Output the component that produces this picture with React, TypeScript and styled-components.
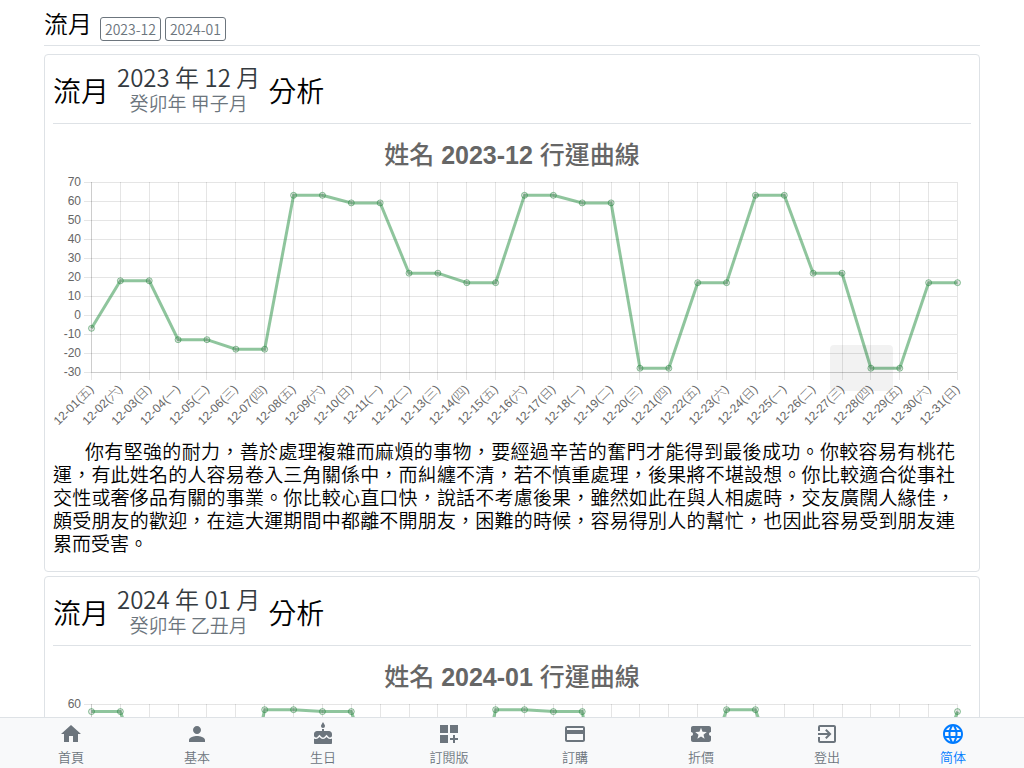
import React from "react";
import styled, { createGlobalStyle } from "styled-components";
import {
  MdHome,
  MdPerson,
  MdCake,
  MdDashboardCustomize,
  MdPayment,
  MdLocalActivity,
  MdExitToApp,
  MdLanguage,
} from "react-icons/md";

const GlobalStyle = createGlobalStyle`
  *, *::before, *::after { box-sizing: border-box; }
  body {
    margin: 0;
    background: #fff;
    color: #000;
    font-family: "Noto Sans CJK TC", "Noto Sans", sans-serif;
    font-weight: 350;
  }
`;

const Shell = styled.div`
  display: flex;
  flex-direction: column;
  height: 100vh;
`;

const Content = styled.main`
  flex: 1;
  min-height: 0;
  overflow-y: auto;
  scrollbar-width: none;
  padding: 0 44px;
`;

const TopBar = styled.header`
  display: flex;
  align-items: flex-end;
  gap: 4px;
  height: 46px;
  padding-bottom: 4px;
  margin-bottom: 8px;
  border-bottom: 1px solid #dee2e6;
`;

const PageTitle = styled.h1`
  margin: 0 4px 0 0;
  font-size: 24px;
  line-height: 36px;
  font-weight: inherit;
`;

const MonthButton = styled.button`
  height: 24px;
  padding: 0 4px;
  border: 1px solid #6c757d;
  border-radius: 3px;
  background: transparent;
  color: #6c757d;
  font-family: inherit;
  font-size: 14px;
  font-weight: inherit;
  line-height: 22px;
  cursor: pointer;
`;

const Card = styled.section`
  margin-bottom: 4px;
  padding: 8px;
  border: 1px solid #dee2e6;
  border-radius: 4px;
`;

const CardHeader = styled.h2`
  display: flex;
  align-items: center;
  gap: 8px;
  height: 61px;
  margin: 0 0 6px;
  padding-bottom: 6px;
  border-bottom: 1px solid #dee2e6;
  font-size: 28px;
  line-height: 32px;
  font-weight: inherit;
`;

const MonthName = styled.span`
  display: flex;
  flex-direction: column;
  align-items: center;
  padding-bottom: 4px;
  color: #343a40;
  font-size: 24px;
  line-height: 28px;
`;

const LunarName = styled.small`
  color: #6c757d;
  font-size: 19px;
  line-height: 23px;
`;

const Reading = styled.p`
  margin: 3px 0 9px;
  padding-right: 16px;
  font-size: 19px;
  line-height: 23px;
  text-indent: 32px;
  text-align: justify;
`;

const ChartSvg = styled.svg`
  display: block;
  width: 100%;
  height: auto;
  font-family: "Liberation Sans", "Noto Sans CJK TC", sans-serif;
  font-size: 12px;
  font-weight: 300;
  fill: #666;
`;

const ChartTitle = styled.text`
  font-size: 25px;
  font-weight: 700;
`;

const TitleWord = styled.tspan`
  font-weight: 500;
`;

const NavBar = styled.nav`
  display: flex;
  height: 51px;
  padding: 0 8px;
  border-top: 1px solid #dee2e6;
  background: #f8f9fa;
`;

const NavLink = styled.a<{ $active?: boolean }>`
  flex: 1;
  display: flex;
  flex-direction: column;
  align-items: center;
  padding-top: 4px;
  color: ${(p) => (p.$active ? "#007bff" : "#6c757d")};
  font-size: 13px;
  line-height: 22px;
  text-decoration: none;

  svg {
    flex: none;
  }
`;

type Month = {
  id: string;
  year: string;
  month: string;
  lunar: string;
  max: number;
  firstWeekday: number;
  values: number[];
  tooltip?: boolean;
  reading: string;
};

const months: Month[] = [
  {
    id: "2023-12",
    year: "2023",
    month: "12",
    lunar: "癸卯年 甲子月",
    max: 70,
    firstWeekday: 5,
    tooltip: true,
    values: [
      -7, 18, 18, -13, -13, -18, -18, 63, 63, 59, 59, 22, 22, 17, 17, 63, 63,
      59, 59, -28, -28, 17, 17, 63, 63, 22, 22, -28, -28, 17, 17,
    ],
    reading:
      "你有堅強的耐力，善於處理複雜而麻煩的事物，要經過辛苦的奮門才能得到最後成功。你較容易有桃花運，有此姓名的人容易卷入三角關係中，而糾纏不清，若不慎重處理，後果將不堪設想。你比較適合從事社交性或奢侈品有關的事業。你比較心直口快，說話不考慮後果，雖然如此在與人相處時，交友廣闊人緣佳，頗受朋友的歡迎，在這大運期間中都離不開朋友，困難的時候，容易得別人的幫忙，也因此容易受到朋友連累而受害。",
  },
  {
    id: "2024-01",
    year: "2024",
    month: "01",
    lunar: "癸卯年 乙丑月",
    max: 60,
    firstWeekday: 1,
    values: [
      56, 56, 13, 13, -10, -10, 57, 57, 56, 56, 13, 13, -10, -10, 57, 57, 56,
      56, -28, -28, 13, 13, 57, 57, 13, 13, -28, -28, 13, 13, 56,
    ],
    reading: "",
  },
];

const WEEKDAYS = "日一二三四五六";
const LEFT = 38;
const RIGHT = 904;
const TOP = 52;
const ROW = 19;
const ROWS = 10;
const BOTTOM = TOP + ROW * ROWS;
const LINE = "rgba(32, 140, 60, 0.5)";

function MonthChart({ data }: { data: Month }) {
  const step = (RIGHT - LEFT) / (data.values.length - 1);
  const x = (i: number) => LEFT + 0.5 + i * step;
  const y = (v: number) => TOP + ((data.max - v) / 10) * ROW;
  const rows = Array.from({ length: ROWS + 1 }, (_, i) => i);

  return (
    <ChartSvg viewBox="0 0 918 306" role="img" aria-label={`${data.id} 行運曲線`}>
      <ChartTitle x="459" y="34" textAnchor="middle">
        <TitleWord>姓名</TitleWord> {data.id} <TitleWord>行運曲線</TitleWord>
      </ChartTitle>
      {rows.map((r) => (
        <g key={r}>
          <rect x={LEFT - 7} y={TOP + r * ROW} width={RIGHT - LEFT + 7} height="1" fill="rgba(0,0,0,0.1)" />
          <text x="28" y={TOP + r * ROW + 4} textAnchor="end">
            {data.max - r * 10}
          </text>
        </g>
      ))}
      {data.values.map((_, i) => (
        <g key={i}>
          <rect x={Math.floor(x(i))} y={TOP} width="1" height={BOTTOM - TOP + 8} fill="rgba(0,0,0,0.1)" />
          <text transform={`translate(${x(i)} ${BOTTOM + 15}) rotate(-45)`} x="0" y="4" textAnchor="end">
            {`${data.month}-${String(i + 1).padStart(2, "0")}(${WEEKDAYS[(data.firstWeekday + i) % 7]})`}
          </text>
        </g>
      ))}
      <rect x={LEFT} y={TOP} width="1" height={BOTTOM - TOP} fill="rgba(0,0,0,0.1)" />
      <rect x={LEFT} y={BOTTOM} width={RIGHT - LEFT} height="1" fill="rgba(0,0,0,0.1)" />
      <polyline
        points={data.values.map((v, i) => `${x(i)},${y(v)}`).join(" ")}
        fill="none"
        stroke={LINE}
        strokeWidth="3"
      />
      {data.values.map((v, i) => (
        <circle key={i} cx={x(i)} cy={y(v)} r="3" fill="rgba(0,0,0,0.1)" stroke={LINE} />
      ))}
      {data.tooltip && (
        <path
          d="M781 215h55a4 4 0 0 1 4 4v17l3 2-3 2v17a4 4 0 0 1-4 4h-55a4 4 0 0 1-4-4v-38a4 4 0 0 1 4-4z"
          fill="rgba(0,0,0,0.05)"
        />
      )}
    </ChartSvg>
  );
}

const navItems = [
  { label: "首頁", Icon: MdHome },
  { label: "基本", Icon: MdPerson },
  { label: "生日", Icon: MdCake },
  { label: "訂閱版", Icon: MdDashboardCustomize },
  { label: "訂購", Icon: MdPayment },
  { label: "折價", Icon: MdLocalActivity },
  { label: "登出", Icon: MdExitToApp },
  { label: "简体", Icon: MdLanguage, active: true },
];

export default function App() {
  return (
    <Shell lang="zh-Hant">
      <GlobalStyle />
      <Content>
        <TopBar>
          <PageTitle>流月</PageTitle>
          {months.map((m) => (
            <MonthButton key={m.id} type="button">
              {m.id}
            </MonthButton>
          ))}
        </TopBar>
        {months.map((m) => (
          <Card key={m.id}>
            <CardHeader>
              <span>流月</span>
              <MonthName>
                {m.year} 年 {m.month} 月<LunarName>{m.lunar}</LunarName>
              </MonthName>
              <span>分析</span>
            </CardHeader>
            <MonthChart data={m} />
            {m.reading && <Reading>{m.reading}</Reading>}
          </Card>
        ))}
      </Content>
      <NavBar>
        {navItems.map(({ label, Icon, active }) => (
          <NavLink key={label} href="#" $active={active}>
            <Icon size={24} />
            {label}
          </NavLink>
        ))}
      </NavBar>
    </Shell>
  );
}
